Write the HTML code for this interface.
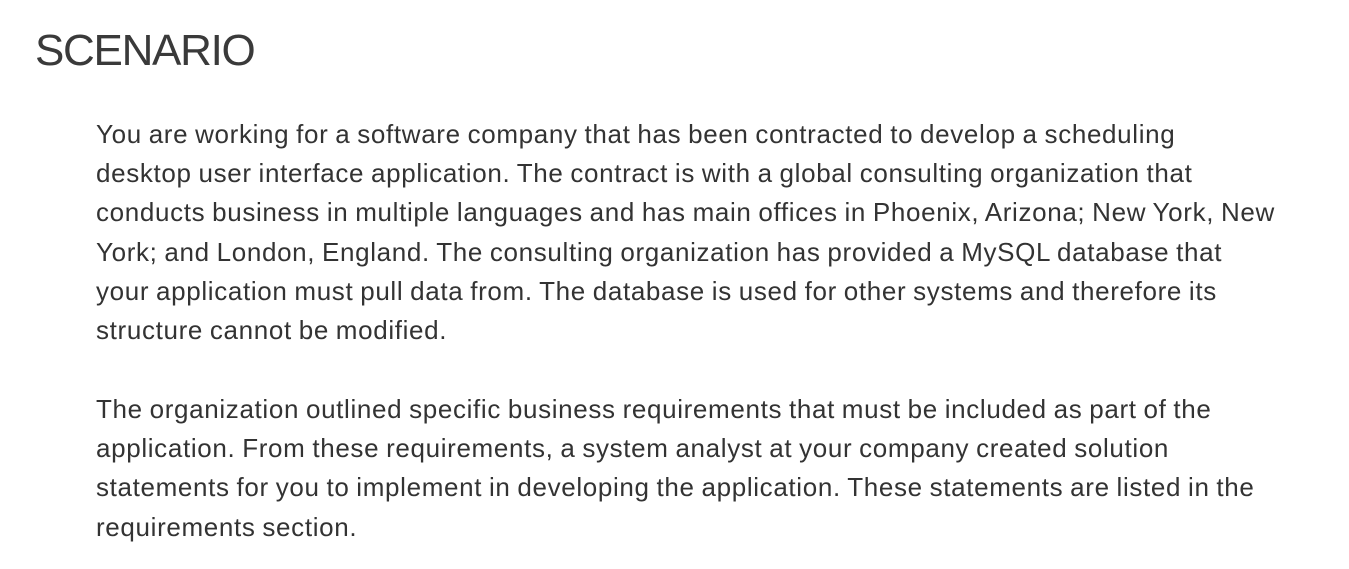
<!DOCTYPE html>
<html><head><meta charset="utf-8"><style>
html,body{margin:0;padding:0;background:#fff;width:1349px;height:569px;overflow:hidden}
h1{position:absolute;left:35px;top:24px;margin:0;font:300 44px/54px "Liberation Sans",sans-serif;color:#3a3a3a;letter-spacing:-1.3px}
.p{position:absolute;left:96px;font:26px/39.2px "Liberation Sans",sans-serif;color:#333;white-space:nowrap;letter-spacing:0.65px;word-spacing:-1px}
</style></head><body>
<h1>SCENARIO</h1>
<div class="p" style="top:115px">You are working for a software company that has been contracted to develop a scheduling<br>desktop user interface application. The contract is with a global consulting organization that<br>conducts business in multiple languages and has main offices in Phoenix, Arizona; New York, New<br>York; and London, England. The consulting organization has provided a MySQL database that<br>your application must pull data from. The database is used for other systems and therefore its<br>structure cannot be modified.</div>
<div class="p" style="top:390px">The organization outlined specific business requirements that must be included as part of the<br>application. From these requirements, a system analyst at your company created solution<br>statements for you to implement in developing the application. These statements are listed in the<br>requirements section.</div>
</body></html>
